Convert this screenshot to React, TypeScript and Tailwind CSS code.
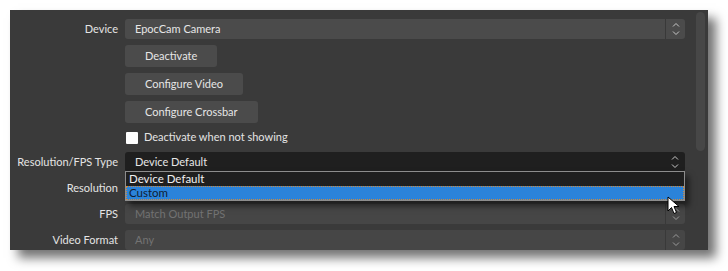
const font = { fontFamily: 'Lato, "Liberation Sans", sans-serif' };

const Arrows = ({ dim }: { dim?: boolean }) => (
  <svg width="10" height="16" viewBox="0 0 10 16" className={dim ? 'text-[#9a9a9a]' : 'text-[#c8c8c8]'}>
    <path d="M2 5.5 L5 2.5 L8 5.5" fill="none" stroke="currentColor" strokeWidth="1" />
    <path d="M2 10.5 L5 13.5 L8 10.5" fill="none" stroke="currentColor" strokeWidth="1" />
  </svg>
);

const Label = ({ children }: { children: React.ReactNode }) => (
  <div className="w-[108px] shrink-0 whitespace-nowrap text-right text-[11px] text-[#e4e4e4]">{children}</div>
);

const Combo = ({ value, variant = 'normal' }: { value: string; variant?: 'normal' | 'dark' | 'disabled' }) => {
  const bg = variant === 'dark' ? 'bg-[#1f1f1f]' : variant === 'disabled' ? 'bg-[#464646]' : 'bg-[#4b4b4b]';
  const text = variant === 'disabled' ? 'text-[#737373]' : 'text-[#e6e6e6]';
  return (
    <div className={`flex h-5 w-[560px] items-center rounded-[3px] ${bg}`}>
      <div className={`flex-1 whitespace-nowrap pl-[10px] text-[11px] ${text}`}>{value}</div>
      <div className={`flex h-full w-5 items-center justify-center ${variant === 'dark' ? '' : 'border-l border-[#393939]'}`}>
        <Arrows dim={variant === 'disabled'} />
      </div>
    </div>
  );
};

const Button = ({ children }: { children: React.ReactNode }) => (
  <div className="flex h-[22px] w-fit items-center whitespace-nowrap rounded-[3px] bg-[#4b4b4b] px-5 text-[11px] text-[#e6e6e6]">{children}</div>
);

export default function App() {
  return (
    <div className="relative h-[271px] w-[728px] overflow-hidden bg-white" style={font}>
      <div className="ml-[10px] mt-[10px] flex h-[240px] w-[698px] overflow-hidden bg-[#3a3a3a] shadow-[8px_8px_10px_rgba(0,0,0,0.55)]">
        <div className="flex flex-1 flex-col pt-[9px]">
          <div className="flex items-center gap-[7px]">
            <Label>Device</Label>
            <Combo value="EpocCam Camera" />
          </div>
          <div className="ml-[115px] mt-[6px] flex flex-col gap-[6px]">
            <Button>Deactivate</Button>
            <Button>Configure Video</Button>
            <Button>Configure Crossbar</Button>
          </div>
          <div className="ml-[115px] mt-[5px] flex h-5 items-center gap-[6px]">
            <div className="ml-px h-[12px] w-[12px] rounded-[1px] bg-white" />
            <span className="text-[11px] text-[#e4e4e4]">Deactivate when not showing</span>
          </div>
          <div className="mt-[5px] flex flex-col gap-[6px]">
            <div className="relative flex items-center gap-[7px]">
              <Label>Resolution/FPS Type</Label>
              <Combo value="Device Default" variant="dark" />
            </div>
            <div className="relative flex items-center gap-[7px]">
              <Label>Resolution</Label>
              <Combo value="" />
              <div className="absolute -top-[7px] left-[115px] z-10 flex w-[560px] flex-col border border-[#8d8d8d] bg-[#1f1f1f] shadow-[4px_5px_6px_rgba(0,0,0,0.5)]">
                <div className="flex h-[14px] items-center pl-[3px] text-[11.5px] text-[#f0f0f0]">Device Default</div>
                <div className="flex h-[14px] items-center border border-dotted border-[#d08a3a] bg-[#2b83da] pl-[2px] text-[11.5px] text-[#0f1d33]">Custom</div>
              </div>
            </div>
            <div className="flex items-center gap-[7px]">
              <Label>FPS</Label>
              <Combo value="Match Output FPS" variant="disabled" />
            </div>
            <div className="flex items-center gap-[7px]">
              <Label>Video Format</Label>
              <Combo value="Any" variant="disabled" />
            </div>
          </div>
        </div>
        <div className="w-3 shrink-0 pr-[2px] pt-[2px]">
          <div className="h-[139px] w-[9px] rounded-full bg-[#474747]" />
        </div>
      </div>
      <svg className="absolute left-[667px] top-[196px] z-20" width="14" height="20" viewBox="0 0 14 20">
        <path d="M1 1 L1 15 L4.5 11.5 L7 17.5 L9.5 16.5 L7 10.5 L12 10.5 Z" fill="#fff" stroke="#000" strokeWidth="1" />
      </svg>
    </div>
  );
}
